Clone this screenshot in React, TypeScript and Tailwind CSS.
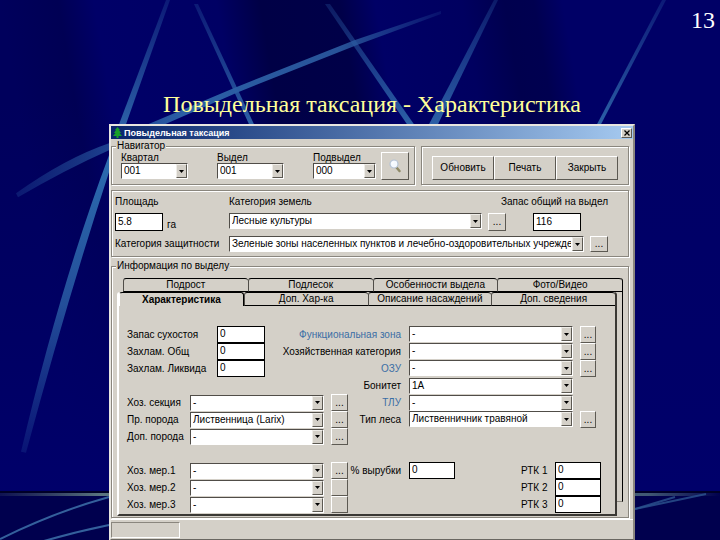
import { useId, useState } from 'react'
import type { ReactNode } from 'react'
import clsx from 'clsx'

const backTabs = ['Подрост', 'Подлесок', 'Особенности выдела', 'Фото/Видео']
const frontTabs = ['Характеристика', 'Доп. Хар-ка', 'Описание насаждений', 'Доп. сведения']

const groupBox = 'border border-[#8a867e] shadow-[1px_1px_0_#fff,inset_1px_1px_0_#fff]'
const raised = 'border border-t-white border-l-white border-r-[#5c5952] border-b-[#5c5952] bg-[#d4d0c8]'

function Combo({ id, value, label, className }: { id?: string; value: string; label?: string; className?: string }) {
  return (
    <div className={clsx('relative h-4 min-w-0', className)}>
      <select
        id={id}
        aria-label={label}
        className="block h-4 w-full appearance-none overflow-hidden border border-t-[#504d48] border-r-white border-b-white border-l-[#504d48] bg-white pr-3 pl-[2px] text-[10px] text-black outline-none"
      >
        <option>{value}</option>
      </select>
      <span className="pointer-events-none absolute top-px right-px flex h-[14px] w-[11px] items-center justify-center border border-t-[#efede8] border-r-[#5c5952] border-b-[#5c5952] border-l-[#efede8] bg-[#d4d0c8]">
        <svg width="5" height="3" viewBox="0 0 5 3">
          <path d="M0 0h5L2.5 3z" fill="#000" />
        </svg>
      </span>
    </div>
  )
}

function TextBox({ id, value, className }: { id: string; value: string; className?: string }) {
  return (
    <input
      id={id}
      defaultValue={value}
      className={clsx('block border border-black bg-white pb-[2px] pl-[2px] text-[10px] leading-3 text-black outline-none', className)}
    />
  )
}

function MoreButton({ label, text = '...', className }: { label: string; text?: string; className?: string }) {
  return (
    <button
      type="button"
      aria-label={label}
      className={clsx(raised, 'flex items-center justify-center text-[10px] leading-3', className)}
    >
      {text}
    </button>
  )
}

function NavSelect({ label, value }: { label: string; value: string }) {
  const id = useId()
  return (
    <div className="min-w-0">
      <label htmlFor={id} className="block leading-[11px]">{label}</label>
      <Combo id={id} value={value} />
    </div>
  )
}

function NumberField({ label, value }: { label: string; value: string }) {
  const id = useId()
  return (
    <>
      <label htmlFor={id} className="w-[90px]">{label}</label>
      <TextBox id={id} value={value} className="h-[17px] w-12" />
    </>
  )
}

function LeftCombo({ label, value, more = '...' }: { label: string; value: string; more?: string }) {
  const id = useId()
  return (
    <>
      <label htmlFor={id} className="w-[63px]">{label}</label>
      <Combo id={id} value={value} className="w-[134px]" />
      <MoreButton label={label} text={more} className="ml-[7px] h-[17px] w-[17px]" />
    </>
  )
}

function RightCombo({ label, value, blue, more }: { label: string; value: string; blue?: boolean; more?: boolean }) {
  const id = useId()
  return (
    <>
      <label htmlFor={id} className={clsx('flex-1 pr-2 text-right', blue && 'text-[#3a6ea5]')}>{label}</label>
      <div className="flex w-[192px] gap-[7px]">
        <Combo id={id} value={value} className="w-[164px]" />
        {more && <MoreButton label={label} className="h-[17px] w-4" />}
      </div>
    </>
  )
}

function RtkField({ label }: { label: string }) {
  const id = useId()
  return (
    <>
      <label htmlFor={id} className="ml-auto w-[34px]">{label}</label>
      <TextBox id={id} value="0" className="h-[17px] w-[46px]" />
    </>
  )
}

function Row({ children }: { children?: ReactNode }) {
  return <div className="flex h-[17px] items-center whitespace-nowrap">{children}</div>
}

function Tab({ name, active, onClick }: { name: string; active?: boolean; onClick: () => void }) {
  return (
    <button
      type="button"
      role="tab"
      aria-selected={!!active}
      onClick={onClick}
      className={clsx(
        'h-[14px] flex-1 basis-0 rounded-t-[3px] border-t border-t-black bg-[#d4d0c8] text-[10px] leading-3 whitespace-nowrap',
        active ? 'border-r border-l border-r-black border-l-white font-bold' : 'border-b border-l border-b-black border-l-[#504d48]',
      )}
    >
      {name}
    </button>
  )
}

function Backdrop() {
  return (
    <svg className="absolute inset-0 h-full w-full" viewBox="0 0 720 540" preserveAspectRatio="none" aria-hidden="true">
      <defs>
        <linearGradient id="folds" gradientUnits="userSpaceOnUse" x1="0" y1="0" x2="700" y2="-120">
          <stop offset="0" stopColor="#00005c" />
          <stop offset="0.08" stopColor="#000054" />
          <stop offset="0.13" stopColor="#000068" />
          <stop offset="0.3" stopColor="#000064" />
          <stop offset="0.36" stopColor="#000046" />
          <stop offset="0.47" stopColor="#000048" />
          <stop offset="0.52" stopColor="#000066" />
          <stop offset="0.64" stopColor="#000060" />
          <stop offset="0.7" stopColor="#00004e" />
          <stop offset="0.74" stopColor="#000050" />
          <stop offset="0.78" stopColor="#000066" />
          <stop offset="1" stopColor="#000066" />
        </linearGradient>
        <linearGradient id="lower" x1="0" y1="0" x2="0" y2="1">
          <stop offset="0" stopColor="#000068" stopOpacity="0" />
          <stop offset="1" stopColor="#00006a" />
        </linearGradient>
        <linearGradient id="down" x1="0" y1="0" x2="0" y2="1">
          <stop offset="0" stopColor="#2858a0" stopOpacity="0.3" />
          <stop offset="1" stopColor="#2c60a6" />
        </linearGradient>
        <linearGradient id="up" x1="0" y1="0" x2="0" y2="1">
          <stop offset="0" stopColor="#2c6cb0" />
          <stop offset="0.5" stopColor="#2c62a8" stopOpacity="0.8" />
          <stop offset="1" stopColor="#2c62a8" stopOpacity="0.2" />
        </linearGradient>
        <linearGradient id="sweep" gradientUnits="userSpaceOnUse" x1="15" y1="0" x2="445" y2="0">
          <stop offset="0" stopColor="#2c62a8" stopOpacity="0.25" />
          <stop offset="0.4" stopColor="#2c60a6" />
          <stop offset="0.75" stopColor="#2c5ca2" stopOpacity="0.9" />
          <stop offset="1" stopColor="#2c5ca2" stopOpacity="0.15" />
        </linearGradient>
        <linearGradient id="horizon" gradientUnits="userSpaceOnUse" x1="0" y1="0" x2="720" y2="0">
          <stop offset="0" stopColor="#4a5c66" stopOpacity="0.2" />
          <stop offset="0.14" stopColor="#5a7480" />
          <stop offset="0.9" stopColor="#405874" />
          <stop offset="1" stopColor="#405874" stopOpacity="0" />
        </linearGradient>
      </defs>
      <rect width="720" height="540" fill="url(#folds)" />
      <rect y="100" width="720" height="392" fill="url(#lower)" />
      <rect y="492" width="720" height="48" fill="#00004e" />
      <path d="M166 0h4L126 124h-7z" fill="url(#down)" />
      <path d="M194 4h4L254 124h-5z" fill="url(#down)" />
      <path d="M325 4h5L414 124h-7z" fill="url(#down)" />
      <path d="M494 0h4L438 124h-9z" fill="url(#down)" />
      <path d="M662 0h4L601 124h-4z" fill="url(#down)" />
      <path d="M441 11L355 40L236 87L148 124L165 124L238 92L357 45L441 14z" fill="url(#sweep)" />
      <path d="M109 143Q65 158 16 193L18 197Q66 169 109 150z" fill="url(#sweep)" />
      <path d="M109 155Q60 285 21 451L26 452Q67 300 109 172z" fill="url(#up)" />
      <path d="M0 491h720" stroke="#000028" strokeWidth="2" />
      <path d="M0 492h720v3H0z" fill="url(#horizon)" />
      <path d="M0 538Q55 511 109 496" fill="none" stroke="#34609c" strokeWidth="2" />
      <path d="M44 540Q75 531 109 524" fill="none" stroke="#34609c" strokeWidth="2" />
      <path d="M635 508L706 493" stroke="#2c5490" strokeWidth="2" strokeOpacity="0.8" />
      <path d="M635 508L675 496" stroke="#2c5490" strokeWidth="2" strokeOpacity="0.8" />
    </svg>
  )
}

export default function App() {
  const [tab, setTab] = useState('Характеристика')

  return (
    <main className="relative flex min-h-screen flex-col overflow-hidden bg-[#000066]">
      <Backdrop />
      <p className="relative mt-2 pr-[5px] text-right font-['Liberation_Serif',serif] text-2xl leading-6 text-white">13</p>
      <h1 className="relative mt-[60px] pl-6 text-center font-['Liberation_Serif',serif] text-2xl leading-6 text-[#ffff99]">
        Повыдельная таксация - Характеристика
      </h1>

      <div className="relative mt-2 mr-[85px] ml-[109px] flex flex-1 flex-col border-2 border-t-[#e8e6e0] border-r-[#8a867e] border-b-[#6a6761] border-l-[#e8e6e0] bg-[#d4d0c8] font-['Liberation_Sans',sans-serif] text-[10px] leading-3 text-black">
        <header className="flex h-[13px] items-center bg-linear-to-r from-[#0a246a] to-[#a6caf0] pr-px pl-[2px] text-white">
          <svg width="9" height="11" viewBox="0 0 9 11" aria-hidden="true">
            <path d="M4.5 0L7 3H6L8 6H6.500L9 9H5.500V11H3.500V9H0L2.500 6H1L3 3H2z" fill="#18a028" />
          </svg>
          <span className="ml-[2px] text-[9px] font-bold">Повыдельная таксация</span>
          <button type="button" aria-label="Закрыть окно" className={clsx(raised, 'ml-auto flex h-[10px] w-[11px] items-center justify-center')}>
            <svg width="6" height="6" viewBox="0 0 6 6">
              <path d="M0.500 0.500l5 5M5.500 0.500l-5 5" stroke="#000" strokeWidth="1.300" />
            </svg>
          </button>
        </header>

        <div className="mt-px mr-1 grid grid-cols-[304fr_208fr] gap-[6px]">
          <fieldset className={clsx(groupBox, 'h-[45px] min-w-0 pr-[5px] pl-[9px]')}>
            <legend className="-ml-[5px] bg-[#d4d0c8] px-px">Навигатор</legend>
            <div className="flex gap-[5px]">
              <div className="grid flex-1 grid-cols-[67fr_67fr_63fr] gap-[29px]">
                <NavSelect label="Квартал" value="001" />
                <NavSelect label="Выдел" value="001" />
                <NavSelect label="Подвыдел" value="000" />
              </div>
              <button type="button" aria-label="Поиск" className={clsx(raised, 'flex h-7 w-7 items-center justify-center')}>
                <svg width="14" height="14" viewBox="0 0 14 14">
                  <path d="M8.500 8.500l3 3.500" stroke="#8f8a68" strokeWidth="2.500" strokeLinecap="round" />
                  <circle cx="6" cy="5" r="4" fill="#f4f9ff" stroke="#b4c2d4" strokeWidth="1.200" />
                  <path d="M4 5a2 2 0 0 1 2-2" stroke="#fff" fill="none" />
                </svg>
              </button>
            </div>
          </fieldset>
          <div className={clsx(groupBox, 'mt-[6px] flex items-center px-[10px] pt-1')}>
            {['Обновить', 'Печать', 'Закрыть'].map((name) => (
              <button key={name} type="button" className={clsx(raised, 'h-6 flex-1 basis-0')}>{name}</button>
            ))}
          </div>
        </div>

        <section className={clsx(groupBox, 'mt-[5px] mr-1 h-[67px] pt-[5px] pr-[20px] pl-[3px] whitespace-nowrap')}>
          <div className="grid grid-cols-[114px_1fr_24px_102px] items-start">
            <label htmlFor="area">Площадь</label>
            <label htmlFor="land">Категория земель</label>
            <label htmlFor="stock" className="col-span-2 text-right">Запас общий на выдел</label>
          </div>
          <div className="mt-[5px] grid grid-cols-[114px_1fr_24px_102px] items-start">
            <div className="flex items-end gap-1">
              <TextBox id="area" value="5.8" className="h-[18px] w-12" />
              <span>га</span>
            </div>
            <Combo id="land" value="Лесные культуры" />
            <MoreButton label="Категория земель" className="ml-[6px] h-[18px] w-[18px]" />
            <TextBox id="stock" value="116" className="ml-[27px] h-[18px] w-12" />
          </div>
          <div className="mt-[5px] flex items-center">
            <label htmlFor="protect" className="w-[114px]">Категория защитности</label>
            <Combo id="protect" value="Зеленые зоны населенных пунктов и лечебно-оздоровительных учрежде" className="flex-1" />
            <MoreButton label="Категория защитности" className="ml-[6px] h-4 w-[18px]" />
          </div>
        </section>

        <fieldset className={clsx(groupBox, 'mt-[3px] mr-1 min-w-0 pr-[5px] pb-px pl-[5px]')}>
          <legend className="-ml-px bg-[#d4d0c8] px-px">Информация по выделу</legend>
          <div className="mt-[6px] grid">
            <div className="col-start-1 row-start-1 mb-[14px] ml-[6px] rounded-tr-[3px] border-r border-b border-r-black border-b-[#8a867e]">
              <div role="tablist" className="flex">
                {backTabs.map((name) => (
                  <Tab key={name} name={name} onClick={() => setTab(name)} />
                ))}
              </div>
            </div>
            <div className="relative col-start-1 row-start-1 mt-[14px] mr-[6px] rounded-t-[3px] border-r-2 border-b-2 border-l-2 border-r-[#3a3834] border-b-[#3a3834] border-l-white bg-[#d4d0c8]">
              <div role="tablist" className="flex">
                {frontTabs.map((name) => (
                  <Tab key={name} name={name} active={tab === name} onClick={() => setTab(name)} />
                ))}
              </div>
              <div className="pt-5 pr-[14px] pb-px pl-2">
                <Row>
                  <NumberField label="Запас сухостоя" value="0" />
                  <RightCombo label="Функциональная зона" value="-" blue more />
                </Row>
                <Row>
                  <NumberField label="Захлам. Общ" value="0" />
                  <RightCombo label="Хозяйственная категория" value="-" more />
                </Row>
                <Row>
                  <NumberField label="Захлам. Ликвида" value="0" />
                  <RightCombo label="ОЗУ" value="-" blue more />
                </Row>
                <Row>
                  <RightCombo label="Бонитет" value="1А" />
                </Row>
                <Row>
                  <LeftCombo label="Хоз. секция" value="-" />
                  <RightCombo label="ТЛУ" value="-" blue />
                </Row>
                <Row>
                  <LeftCombo label="Пр. порода" value="Лиственница (Larix)" />
                  <RightCombo label="Тип леса" value="Лиственничник травяной" more />
                </Row>
                <Row>
                  <LeftCombo label="Доп. порода" value="-" />
                </Row>
                <Row />
                <Row>
                  <LeftCombo label="Хоз. мер.1" value="-" />
                  <label htmlFor="cut" className="flex-1 pr-2 text-right">% вырубки</label>
                  <div className="flex w-[192px] items-center">
                    <TextBox id="cut" value="0" className="h-[17px] w-[46px]" />
                    <RtkField label="РТК 1" />
                  </div>
                </Row>
                <Row>
                  <LeftCombo label="Хоз. мер.2" value="-" more="" />
                  <RtkField label="РТК 2" />
                </Row>
                <Row>
                  <LeftCombo label="Хоз. мер.3" value="-" more="" />
                  <RtkField label="РТК 3" />
                </Row>
              </div>
            </div>
          </div>
        </fieldset>

        <footer className="mt-px flex flex-1 border-t border-white pt-[2px] pb-px">
          <div className="min-h-4 w-[69px] border border-t-[#8a867e] border-r-white border-b-white border-l-[#8a867e]" />
        </footer>
      </div>
    </main>
  )
}
